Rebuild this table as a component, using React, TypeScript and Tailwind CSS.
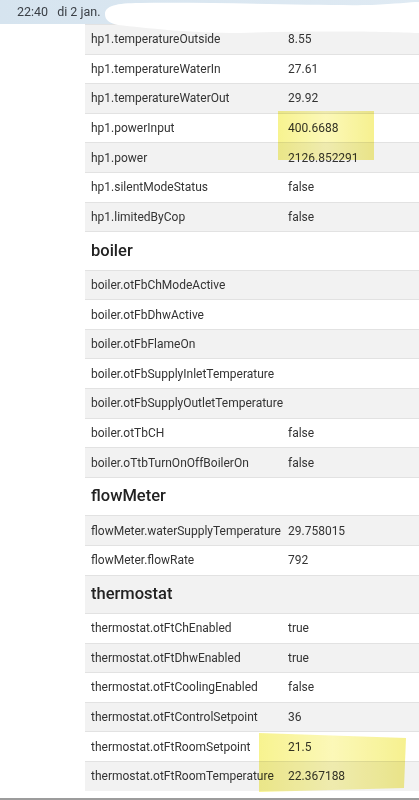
import React from "react";

type Row = { k: string; v?: string } | { heading: string };

const rows: Row[] = [
  { k: "hp1.temperatureOutside", v: "8.55" },
  { k: "hp1.temperatureWaterIn", v: "27.61" },
  { k: "hp1.temperatureWaterOut", v: "29.92" },
  { k: "hp1.powerInput", v: "400.6688" },
  { k: "hp1.power", v: "2126.852291" },
  { k: "hp1.silentModeStatus", v: "false" },
  { k: "hp1.limitedByCop", v: "false" },
  { heading: "boiler" },
  { k: "boiler.otFbChModeActive" },
  { k: "boiler.otFbDhwActive" },
  { k: "boiler.otFbFlameOn" },
  { k: "boiler.otFbSupplyInletTemperature" },
  { k: "boiler.otFbSupplyOutletTemperature" },
  { k: "boiler.otTbCH", v: "false" },
  { k: "boiler.oTtbTurnOnOffBoilerOn", v: "false" },
  { heading: "flowMeter" },
  { k: "flowMeter.waterSupplyTemperature", v: "29.758015" },
  { k: "flowMeter.flowRate", v: "792" },
  { heading: "thermostat" },
  { k: "thermostat.otFtChEnabled", v: "true" },
  { k: "thermostat.otFtDhwEnabled", v: "true" },
  { k: "thermostat.otFtCoolingEnabled", v: "false" },
  { k: "thermostat.otFtControlSetpoint", v: "36" },
  { k: "thermostat.otFtRoomSetpoint", v: "21.5" },
  { k: "thermostat.otFtRoomTemperature", v: "22.367188" },
];

export default function App() {
  return (
    <div className="relative h-[800px] w-[419px] overflow-hidden bg-white font-['Roboto',sans-serif] text-[#333]">
      {/* status bar */}
      <div className="flex h-[24px] items-center bg-gradient-to-r from-[#d6e4ef] to-[#dfeaf3] pl-[17px] text-[12.5px] text-[#3a3f45]">
        <span>22:40</span>
        <span className="ml-[9px]">di 2 jan.</span>
      </div>

      {/* table */}
      <div className="ml-[85px] flex flex-col">
        {rows.map((r, i) => {
          const stripe = i % 2 === 0 ? "bg-[#f2f2f2]" : "bg-white";
          if ("heading" in r) {
            return (
              <div
                key={r.heading}
                className={`flex h-[38.5px] items-center border-t border-[#e2e2e2] pl-[6px] text-[16.5px] font-medium text-[#222] ${stripe}`}
              >
                {r.heading}
              </div>
            );
          }
          return (
            <div
              key={r.k}
              className={`flex h-[29.6px] items-center border-t border-[#e2e2e2] text-[12px] ${stripe}`}
            >
              <span className="w-[197px] shrink-0 pl-[6px] whitespace-nowrap">{r.k}</span>
              <span className="pl-[6px]">{r.v ?? ""}</span>
            </div>
          );
        })}
      </div>

      <div className="mt-[7px] h-[2px] w-full bg-[#9c9c9c]" />

      {/* redaction scribble + highlighter marks */}
      <svg className="pointer-events-none absolute left-0 top-0" width="419" height="800">
        <path
          d="M105,14 C105,6 116,3 140,3 C220,2 320,6 372,5 C395,4 410,2 419,2 L419,33 C390,32 320,30 240,33 C190,33 145,28 118,25 C109,23 105,20 105,14 Z"
          fill="#ffffff"
        />
        <defs>
          <linearGradient id="hl" x1="0" y1="0" x2="1" y2="0">
            <stop offset="0" stopColor="#f5ef6a" />
            <stop offset="0.5" stopColor="#fbf6a0" />
            <stop offset="1" stopColor="#f3ec6a" />
          </linearGradient>
        </defs>
        <rect x="278" y="111" width="96" height="49" fill="url(#hl)" opacity="0.75" style={{ mixBlendMode: "multiply" }} />
        <polygon
          points="259,733 406,738 404,788 259,792"
          fill="url(#hl)"
          opacity="0.75"
          style={{ mixBlendMode: "multiply" }}
        />
      </svg>
    </div>
  );
}
